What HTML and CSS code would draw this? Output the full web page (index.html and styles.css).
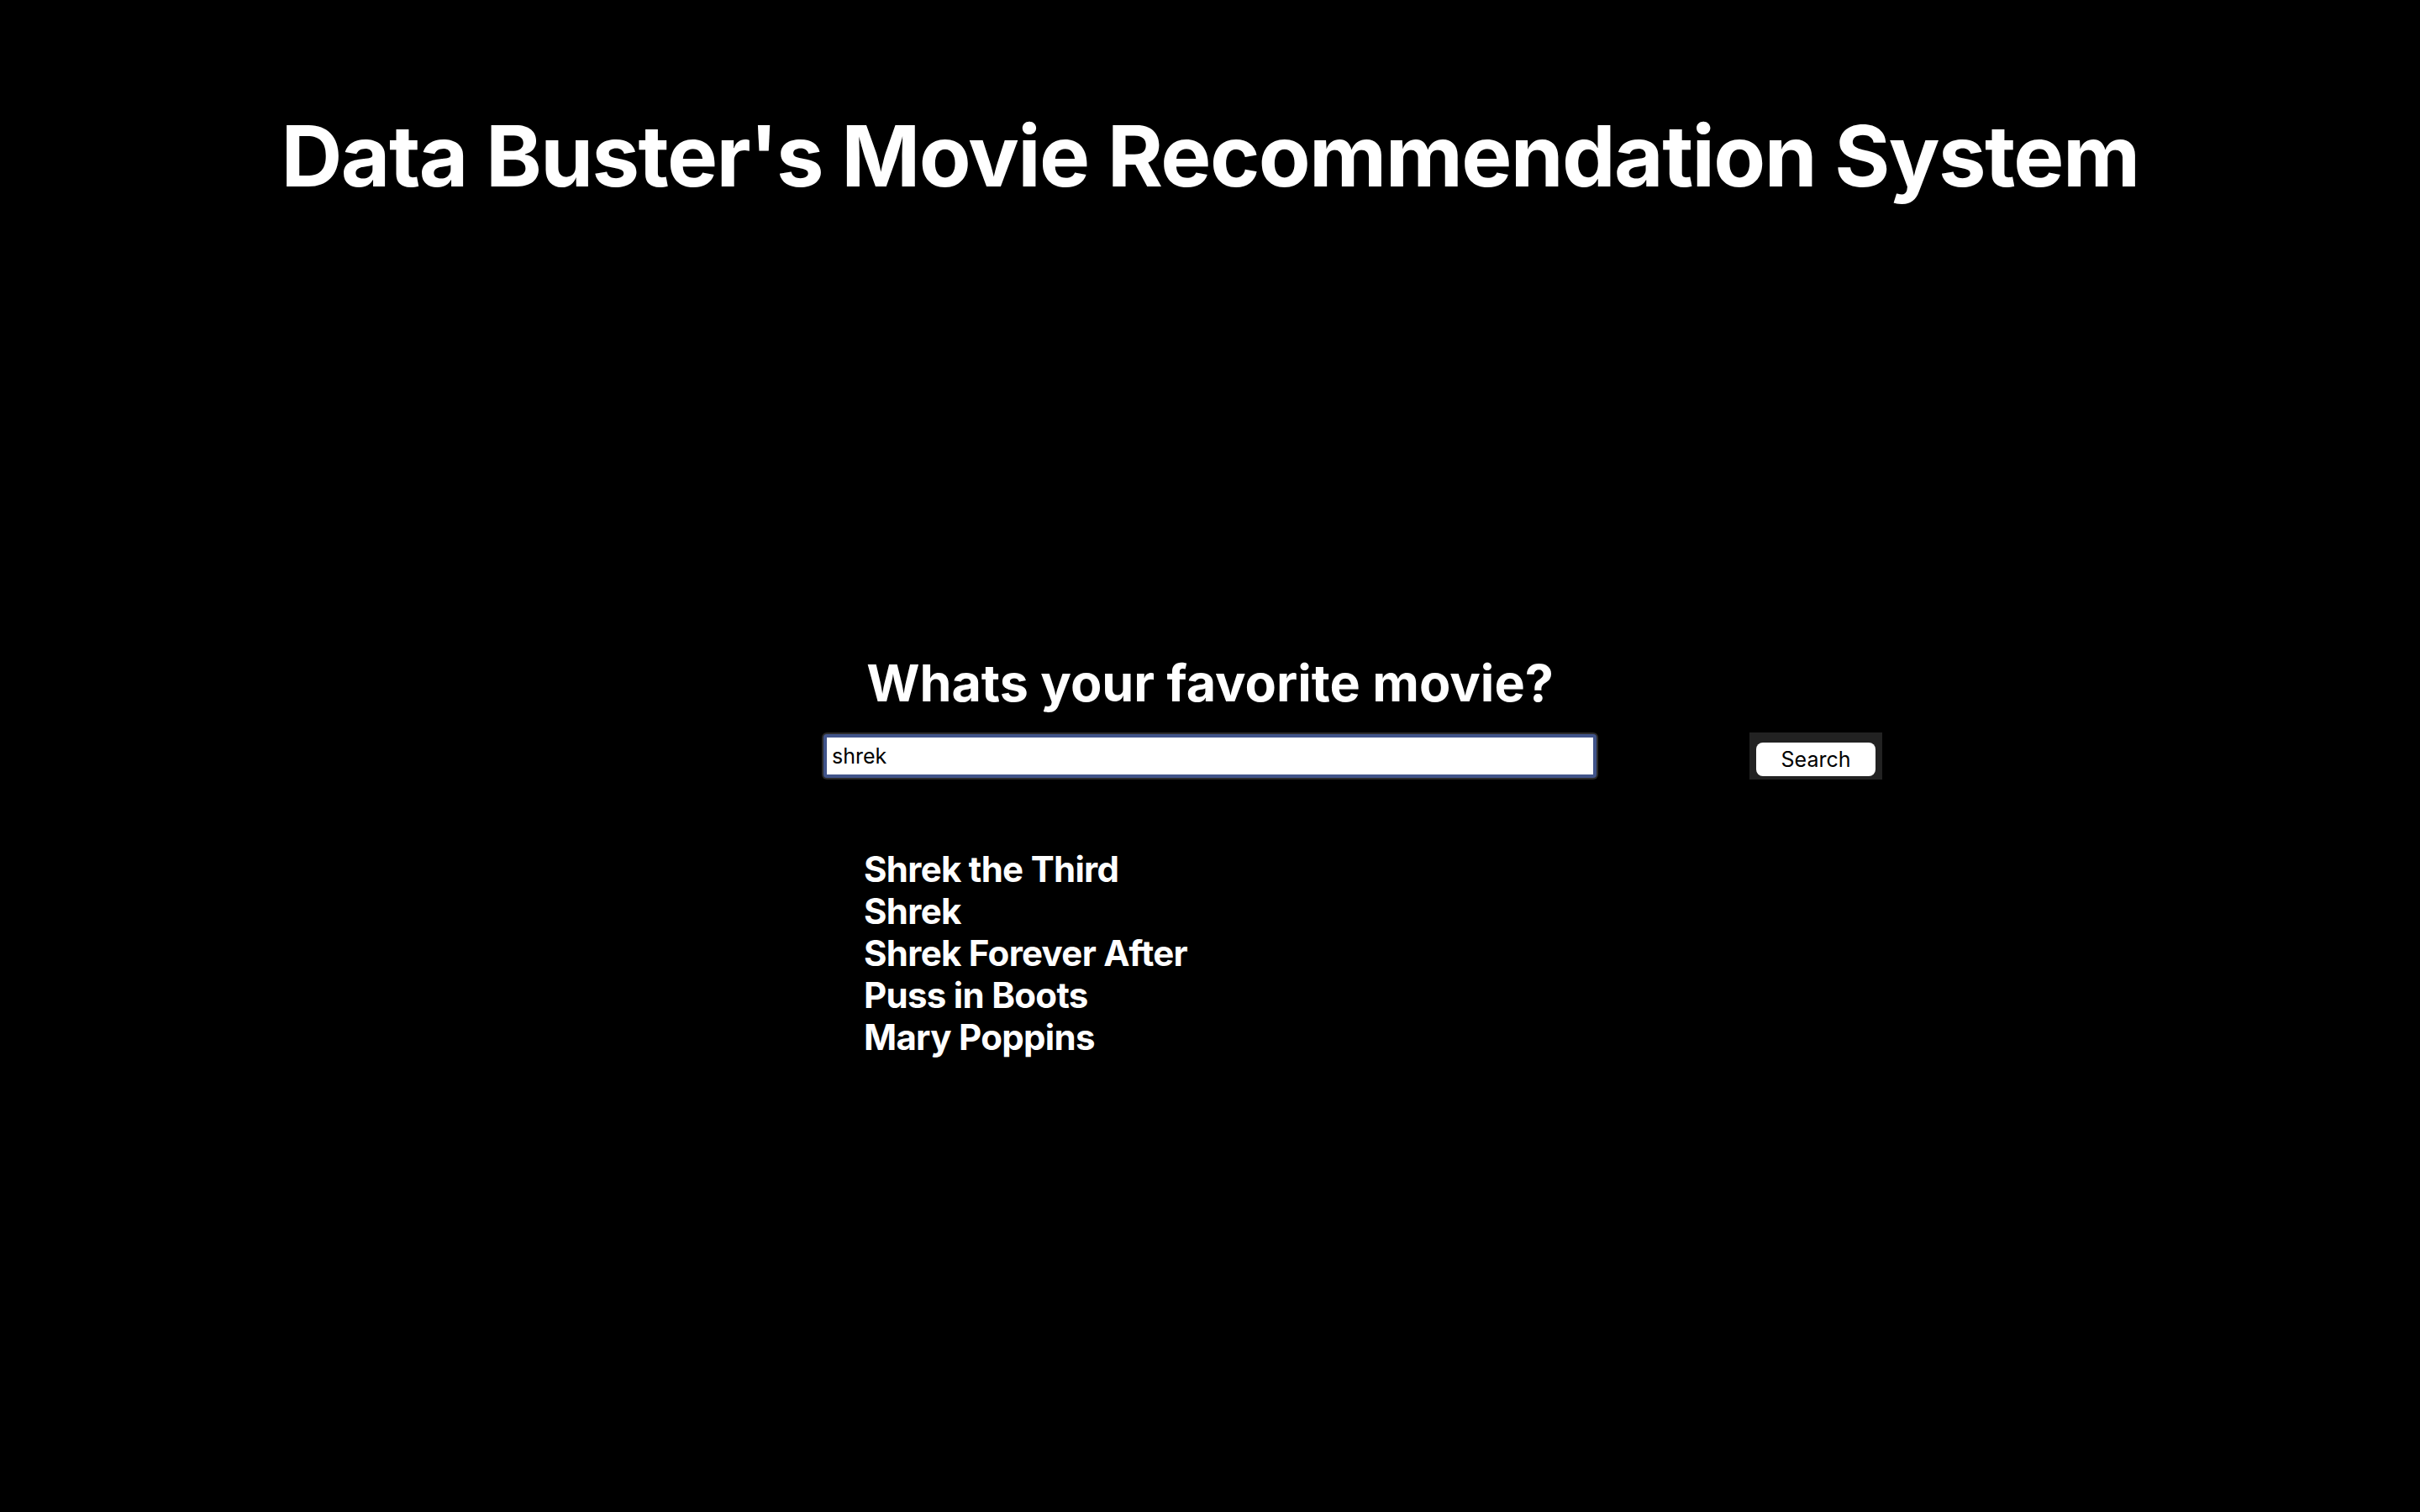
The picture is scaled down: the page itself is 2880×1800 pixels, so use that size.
FILE: index.html
```html
<!DOCTYPE html>
<html lang="en">
<head>
<meta charset="utf-8">
<title>Data Buster's Movie Recommendation System</title>
<link rel="stylesheet" href="styles.css">
</head>
<body>
<h1 class="title">Data Buster's Movie Recommendation System</h1>
<main class="finder">
  <h2 class="question">Whats your favorite movie?</h2>
  <form class="search-row">
    <div class="field"><input class="field-input" type="text" value="shrek"></div>
    <div class="button-box"><button class="search-btn" type="button">Search</button></div>
  </form>
  <ul class="results">
    <li>Shrek the Third</li>
    <li>Shrek</li>
    <li>Shrek Forever After</li>
    <li>Puss in Boots</li>
    <li>Mary Poppins</li>
  </ul>
</main>
</body>
</html>
```
FILE: styles.css
```css
html, body {
  margin: 0;
  padding: 0;
  background: #000;
  color: #fff;
  font-family: Inter, "Noto Sans", sans-serif;
}
body {
  width: 2880px;
  height: 1800px;
  overflow: hidden;
}
.title {
  margin: 124px 0 0;
  font-size: 101px;
  line-height: 122px;
  font-weight: 700;
  text-align: center;
  letter-spacing: -1.6px;
}
.finder {
  margin-top: 531px;
}
.question {
  margin: 0;
  font-size: 61px;
  line-height: 72px;
  font-weight: 700;
  text-align: center;
  letter-spacing: 0;
}
.search-row {
  margin: 23px 0 0;
  display: grid;
  grid-template-columns: 1fr 924px 1fr;
  align-items: start;
}
.field {
  grid-column: 2;
  padding: 2px;
  background: #2a2a2a;
  border-radius: 6px;
}
.field-input {
  display: block;
  box-sizing: border-box;
  width: 920px;
  height: 52px;
  margin: 0;
  padding: 0 6px;
  border: 4px solid #41548a;
  border-radius: 4px;
  background: #fff;
  color: #000;
  font-family: Inter, "Noto Sans", sans-serif;
  font-size: 25px;
  outline: none;
}
.button-box {
  grid-column: 3;
  justify-self: start;
  margin-left: 180px;
  padding: 12px 8px 4px;
  background: #222;
}
.search-btn {
  display: block;
  width: 142px;
  height: 40px;
  margin: 0;
  padding: 0;
  border: none;
  border-radius: 8px;
  background: #fff;
  color: #000;
  font-family: Inter, "Noto Sans", sans-serif;
  font-size: 25px;
}
.results {
  list-style: none;
  margin: 82px 0 0 1028px;
  padding: 0;
  font-size: 42px;
  line-height: 50px;
  font-weight: 700;
  letter-spacing: -0.7px;
}
```
